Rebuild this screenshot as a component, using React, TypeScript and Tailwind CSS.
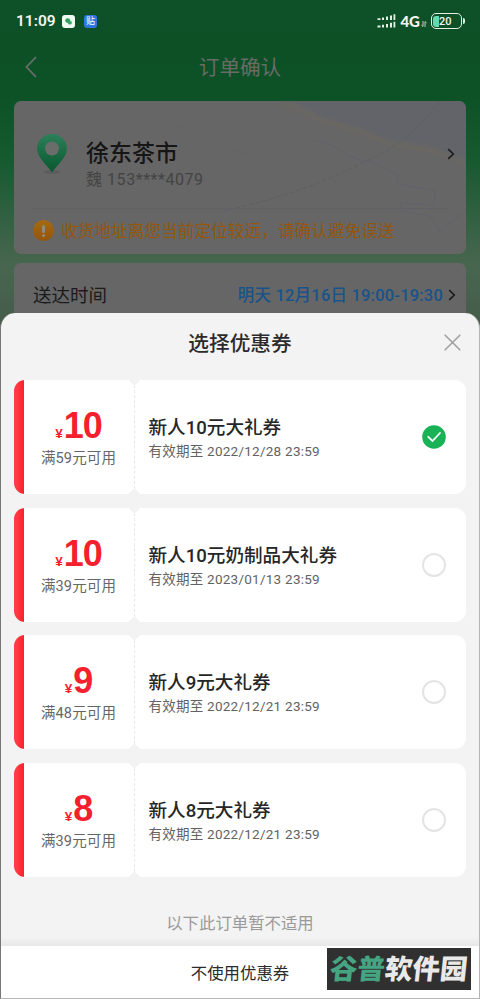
import { useState } from "react";

const coupons = [
  { id: 1, amount: 10, min: "满59元可用", name: "新人10元大礼券", date: "2022/12/28 23:59" },
  { id: 2, amount: 10, min: "满39元可用", name: "新人10元奶制品大礼券", date: "2023/01/13 23:59" },
  { id: 3, amount: 9, min: "满48元可用", name: "新人9元大礼券", date: "2022/12/21 23:59" },
  { id: 4, amount: 8, min: "满39元可用", name: "新人8元大礼券", date: "2022/12/21 23:59" },
];

function StatusBar() {
  return (
    <div className="flex h-[42px] items-center pl-4 pr-[15px] text-[#f0f5f0]">
      <span className="mt-[1px] w-[46px] text-[15.500px] font-semibold leading-none font-['Roboto']">11:09</span>
      <svg width="13" height="13" viewBox="0 0 13 13">
        <rect width="13" height="13" rx="3" fill="#f2fbf3" />
        <ellipse cx="5.7" cy="5.6" rx="2.500" ry="2.300" fill="#2f9e5b" />
        <ellipse cx="7.800" cy="7.7" rx="2.100" ry="1.900" fill="#3aab68" />
      </svg>
      <span className="ml-[9px] flex h-[13px] w-[13px] items-center justify-center rounded-[3px] bg-[#2f76e0] text-[9px] leading-none text-white">
        贴
      </span>
      <svg className="ml-auto" width="19" height="14" viewBox="0 0 19 14" fill="#e6f0e6">
        <path d="M.5 4.2h3V6h-3zM5 3.4h2V6H5zM9 2.6h2V6H9zM13 1.4h2V6h-2zM16.5.3h1.8V6h-1.8z" />
        <path d="M.5 11.6h3v1.8h-3zM5 10.8h2v2.6H5zM9 10h2v3.4H9zM13 8.8h2v4.6h-2zM16.5 7.7h1.8v5.7h-1.8z" />
      </svg>
      <span className="ml-[4px] text-[15px] font-black leading-none font-['Lato']">4G</span>
      <svg className="mt-[5px] ml-[1px]" width="6" height="6" viewBox="0 0 6 6" stroke="#cfdccf" strokeWidth=".9" fill="none">
        <path d="M2 0v5.5L.4 4M4 6V.6L5.6 2" />
      </svg>
      <div className="ml-[4px] flex h-[16px] w-[31px] items-center rounded-[5px] border-[1.5px] border-[#e3eee5] p-[1px]">
        <div className="h-[11px] w-[6px] rounded-l-[3px] bg-[#62d9ae]" />
        <span className="text-[11px] font-medium leading-none font-['Roboto']">20</span>
      </div>
      <div className="ml-[1px] h-[6px] w-[2px] rounded-r bg-[#e3eee5]" />
    </div>
  );
}

function Chevron() {
  return (
    <svg width="8" height="12" viewBox="0 0 8 12" fill="none" stroke="#1c1c1c" strokeWidth="1.6">
      <path d="M1.2 1.2 6.3 6l-5.1 4.8" />
    </svg>
  );
}

function AddressCard() {
  return (
    <div className="relative mx-[14px] h-[153px] overflow-hidden rounded-[7px] bg-[#666666]">
      {/* faded map behind the address */}
      <svg className="absolute inset-0" width="452" height="153" viewBox="0 0 452 153" fill="none">
        <path d="M280 0 308 15 345 26 375 38 412 43 452 58V0Z" fill="#626469" />
        <path d="M270 2 308 20 345 30 378 44 420 50 452 64" stroke="#686764" strokeWidth="5" />
        <path d="M426 0C390 46 372 49 356 58C315 80 265 98 210 110" stroke="#5d6063" strokeWidth="1" strokeDasharray="5 2" />
        <path d="M300 40C325 40 325 58 356 60l28 14v9l37 7v14l-34-2-1 8 30 5 9 15 27-20" stroke="#606369" strokeWidth="1" />
        <path d="m290 60 70 45M150 20l100 40" stroke="#646565" />
      </svg>
      <div className="relative flex h-[107px] items-start pl-[22px] pr-[11px]">
        <svg className="mt-[32px]" width="32" height="42" viewBox="0 0 32 42">
          <defs>
            <linearGradient id="pin" x1="0" y1="0" x2="0" y2="1">
              <stop offset="0" stopColor="#2c8059" />
              <stop offset="1" stopColor="#08572e" />
            </linearGradient>
          </defs>
          <ellipse cx="16" cy="39" rx="8" ry="2" fill="#5c5c5c" />
          <path d="M16 39.500C13 34 1 25 1 15.500a15 14.500 0 0 1 30 0C31 25 19 34 16 39.500Z" fill="url(#pin)" />
          <circle cx="16" cy="15.500" r="7" fill="#6a6d6a" />
        </svg>
        <div className="ml-[18px] mt-[40px]">
          <div className="text-[23px] font-medium leading-[26px] text-[#161616]">徐东茶市</div>
          <div className="mt-[3px] text-[16px] leading-[20px] tracking-[0.55px] text-[#444]">魏 153****4079</div>
        </div>
        <div className="ml-auto mt-[47px]">
          <Chevron />
        </div>
      </div>
      <div className="relative mx-[18px] border-t border-[#606164]" />
      <div className="relative flex items-start pl-[19px] pt-[11px]">
        <div className="flex h-[21px] w-[21px] items-center justify-center rounded-full bg-linear-to-b from-[#a76a12] to-[#935509]">
          <svg width="3" height="12" viewBox="0 0 3 12" fill="#8f897f">
            <rect width="3" height="8" rx="1.500" />
            <circle cx="1.500" cy="10.500" r="1.500" />
          </svg>
        </div>
        <span className="mt-[1px] ml-[7px] whitespace-nowrap text-[16.700px] leading-[21px] text-[#94560c]">
          收货地址离您当前定位较远，请确认避免误送
        </span>
      </div>
    </div>
  );
}

function CouponCard({ coupon, checked, onSelect }) {
  return (
    <div onClick={onSelect} className="relative flex h-[114px] overflow-hidden rounded-[11px] bg-white">
      <div className="w-[9.500px] bg-linear-to-r from-[#ff4049] to-[#fb1f2d]" />
      <div className="flex w-[111px] flex-col items-center border-r border-dashed border-[#e8e8e8] pt-[26px]">
        <div className="flex items-baseline font-bold leading-[40px] text-[#f5202d] font-['Liberation_Sans']">
          <span className="mr-[1px] text-[13.500px]">¥</span>
          <span className="text-[36px] tracking-[-1px]">{coupon.amount}</span>
        </div>
        <div className="mt-[-6px] text-[14.500px] leading-[22px] tracking-[0.15px] text-[#666]">{coupon.min}</div>
      </div>
      <div className="ml-[14px] pt-[35px]">
        <div className="text-[18.600px] font-medium leading-[26px] text-[#262626]">{coupon.name}</div>
        <div className="mt-[-1px] text-[13.500px] leading-[22px] tracking-[0.25px] text-[#626262]">有效期至 {coupon.date}</div>
      </div>
      <div className="ml-auto mr-[20px] self-center">
        {checked ? (
          <svg width="24" height="24" viewBox="0 0 24 24" fill="none">
            <circle cx="12" cy="12" r="11.800" fill="#19b256" />
            <path d="m6.200 11.800 4.300 4.200 7.500-8" stroke="#fff" strokeWidth="1.800" strokeLinecap="round" />
          </svg>
        ) : (
          <div className="h-[24px] w-[24px] rounded-full border-2 border-[#e4e4e4]" />
        )}
      </div>
      {/* ticket notches */}
      <div className="absolute left-[116px] top-[-5px] h-[9px] w-[9px] rotate-45 bg-[#f3f3f3]" />
      <div className="absolute bottom-[-5px] left-[116px] h-[9px] w-[9px] rotate-45 bg-[#f3f3f3]" />
    </div>
  );
}

export default function App() {
  const [selected, setSelected] = useState(1);

  return (
    <div className="relative h-[999px] w-[480px] overflow-hidden bg-[linear-gradient(180deg,#0e5027_0px,#0d5127_95px,#165a30_160px,#48664f_265px,#455b4b_330px)] font-['Roboto','Noto_Sans_CJK_SC',sans-serif]">
      <StatusBar />
      <div className="relative flex h-[59px] items-start justify-center pt-[13px]">
        <svg className="absolute left-[25px] top-[14px]" width="12" height="22" viewBox="0 0 12 22" fill="none" stroke="#6a6f6a" strokeWidth="1.800">
          <path d="M11 1 1.500 11 11 21" />
        </svg>
        <span className="text-[20.600px] leading-[26px] text-[#686c67]">订单确认</span>
      </div>
      <AddressCard />
      <div className="mx-[14px] mt-[9px] flex h-[70px] items-start rounded-[7px] bg-[#666] pl-[19px] pr-[10px] pt-[20px]">
        <span className="text-[18.500px] leading-[26px] text-[#1b1b1b]">送达时间</span>
        <span className="ml-auto mr-[5px] text-[16.500px] font-medium leading-[26px] tracking-[0.2px] text-[#19538a]">明天 12月16日 19:00-19:30</span>
        <div className="mt-[6px]">
          <Chevron />
        </div>
      </div>

      <div className="absolute inset-x-0 bottom-0 top-[313px] flex flex-col overflow-hidden rounded-t-[15px] border-x border-b border-b-[#b5b5b5] border-l-[#777] border-r-[#b5b5b5] bg-[#f3f3f3]">
        <div className="relative flex h-[67px] shrink-0 justify-center pt-[17px]">
          <span className="text-[20.700px] font-medium leading-[28px] text-[#2b2b2b]">选择优惠券</span>
          <svg className="absolute right-[18px] top-[21px]" width="17" height="17" viewBox="0 0 17 17" stroke="#9f9f9f" strokeWidth="1.500">
            <path d="m.7.7 15.600 15.600M16.300.7.7 16.300" />
          </svg>
        </div>
        <div className="flex shrink-0 flex-col gap-[13.600px] px-[13px]">
          {coupons.map((c) => (
            <CouponCard key={c.id} coupon={c} checked={c.id === selected} onSelect={() => setSelected(c.id)} />
          ))}
        </div>
        <div className="shrink-0 pt-[35px] text-center text-[16.400px] leading-[24px] text-[#9a9a9a]">以下此订单暂不适用</div>
        <div className="mt-auto h-[9px] shrink-0 bg-linear-to-b from-[#f3f3f3] to-[#e7e7e7]" />
        <div className="relative flex h-[52px] shrink-0 items-center justify-center bg-white">
          <button className="mt-[3px] text-[16.400px] leading-[24px] text-[#2b2b2b]">不使用优惠券</button>
          <div className="absolute right-[8px] top-[2px] flex h-[42px] w-[144px] items-center justify-center bg-[#303030]">
            <span className="mt-[1px] -skew-x-6 whitespace-nowrap text-[27.500px] font-black leading-[42px] text-[#e9e9e9]">
              <span className="text-[#45a583]">谷普</span>软件园
            </span>
          </div>
        </div>
      </div>
    </div>
  );
}
